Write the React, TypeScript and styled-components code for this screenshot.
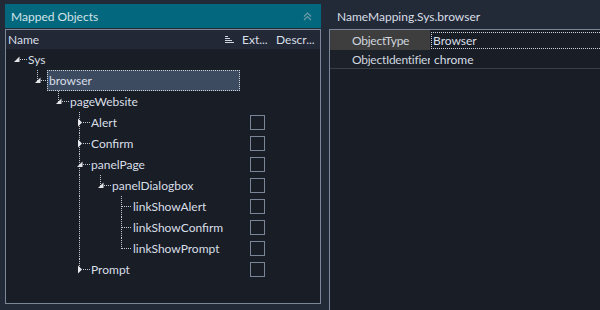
import styled, { createGlobalStyle } from "styled-components";

const GlobalStyle = createGlobalStyle`
  html, body {
    margin: 0;
    padding: 0;
    background: #232a37;
  }
  body {
    font-family: Lato, "Noto Sans", sans-serif;
    font-size: 12px;
    color: #d6dde6;
  }
  * {
    box-sizing: border-box;
  }
`;

const Page = styled.div`
  width: 600px;
  height: 310px;
  display: flex;
  gap: 8px;
  padding: 4px 0 0 5px;
  overflow: hidden;
`;

const LeftPanel = styled.section`
  width: 316px;
  height: 300px;
  display: flex;
  flex-direction: column;
  gap: 1px;
`;

const PanelHeader = styled.div`
  height: 24px;
  flex: none;
  background: #03687e;
  display: flex;
  align-items: center;
  justify-content: space-between;
  padding: 0 9px 0 6px;
  color: #d3e3e8;
`;

const TreeBox = styled.div`
  flex: 1;
  border: 1px solid #7b8698;
  background: #181d26;
  display: flex;
  flex-direction: column;
  overflow: hidden;
`;

const Columns = styled.div`
  display: grid;
  grid-template-columns: 1fr 33px 47px;
`;

const ColumnHeader = styled(Columns)`
  height: 19px;
  background: #222836;
  align-items: center;
  color: #d8dee6;
`;

const HeaderCell = styled.div<{ $pad?: number; $right?: number }>`
  display: flex;
  align-items: center;
  justify-content: space-between;
  padding-left: ${(p) => p.$pad ?? 2}px;
  padding-right: ${(p) => p.$right ?? 0}px;
  white-space: nowrap;
`;

const TreeBody = styled.div`
  display: flex;
  flex-direction: column;
`;

const TreeRow = styled(Columns)`
  height: 21px;
`;

const NameCell = styled.div`
  display: flex;
  align-items: stretch;
  min-width: 0;
`;

const Label = styled.div<{ $selected?: boolean }>`
  flex: 1;
  margin-left: -1px;
  padding-left: 1px;
  line-height: 19px;
  white-space: nowrap;
  color: #d8dfe7;
  border: 1px dotted ${(p) => (p.$selected ? "#c9d0d8" : "transparent")};
  background: ${(p) => (p.$selected ? "#3d4b60" : "transparent")};
`;

const CheckCell = styled.div`
  display: flex;
  align-items: center;
  padding-left: 10px;
`;

const CheckBox = styled.div`
  width: 15px;
  height: 15px;
  border: 1px solid #7a8698;
`;

const RightPanel = styled.section`
  flex: 1;
  display: flex;
  flex-direction: column;
  gap: 1px;
`;

const RightTitle = styled.div`
  height: 24px;
  flex: none;
  display: flex;
  align-items: center;
  padding-left: 8px;
  color: #d8dee6;
`;

const GridBox = styled.div`
  flex: 1;
  border-left: 1px solid #7b8698;
  border-top: 1px solid #7b8698;
  background: #181d26;
`;

const PropRow = styled.div<{ $h: number; $line?: boolean }>`
  display: grid;
  grid-template-columns: 100px 1fr;
  height: ${(p) => p.$h}px;
  border-bottom: ${(p) => (p.$line ? "1px solid #3a3e45" : "none")};
  box-sizing: content-box;
`;

const PropName = styled.div<{ $active?: boolean }>`
  display: flex;
  align-items: center;
  padding-left: 22px;
  background: ${(p) => (p.$active ? "#3e3e3e" : "#1b2029")};
  color: #cfd6df;
  white-space: nowrap;
  letter-spacing: -0.25px;
  overflow: hidden;
`;

const PropValue = styled.div<{ $focused?: boolean }>`
  display: flex;
  padding: ${(p) => (p.$focused ? "2px 0 1px 1px" : "0 0 0 2px")};
  color: #d8dfe7;
`;

const FocusBox = styled.div<{ $focused?: boolean }>`
  flex: 1;
  display: flex;
  align-items: center;
  padding-left: 1px;
  border: 1px dotted ${(p) => (p.$focused ? "#d0d4da" : "transparent")};
  border-right: none;
`;

type Kind = "open" | "closed" | "leaf";

type Node = {
  name: string;
  level: number;
  kind: Kind;
  last: boolean;
  guides: boolean[];
  check?: boolean;
  selected?: boolean;
};

const nodes: Node[] = [
  { name: "Sys", level: 0, kind: "open", last: true, guides: [] },
  { name: "browser", level: 1, kind: "open", last: true, guides: [false], selected: true },
  { name: "pageWebsite", level: 2, kind: "open", last: true, guides: [false, false] },
  { name: "Alert", level: 3, kind: "closed", last: false, guides: [false, false, false], check: true },
  { name: "Confirm", level: 3, kind: "closed", last: false, guides: [false, false, false], check: true },
  { name: "panelPage", level: 3, kind: "open", last: false, guides: [false, false, false], check: true },
  { name: "panelDialogbox", level: 4, kind: "open", last: true, guides: [false, false, false, true], check: true },
  { name: "linkShowAlert", level: 5, kind: "leaf", last: false, guides: [false, false, false, true, false], check: true },
  { name: "linkShowConfirm", level: 5, kind: "leaf", last: false, guides: [false, false, false, true, false], check: true },
  { name: "linkShowPrompt", level: 5, kind: "leaf", last: true, guides: [false, false, false, true, false], check: true },
  { name: "Prompt", level: 3, kind: "closed", last: true, guides: [false, false, false], check: true },
];

const DOT = "#c3c9d1";

const Guide = ({ line }: { line: boolean }) => (
  <svg width="21" height="21" shapeRendering="crispEdges" style={{ flex: "none" }}>
    {line && <line x1="10.5" y1="0" x2="10.5" y2="21" stroke={DOT} strokeDasharray="1 1" />}
  </svg>
);

const Connector = ({ node }: { node: Node }) => (
  <svg width="21" height="21" shapeRendering="crispEdges" style={{ flex: "none" }}>
    {node.level > 0 && (
      <line
        x1="10.5"
        y1="0"
        x2="10.5"
        y2={node.last ? 10.5 : 21}
        stroke={DOT}
        strokeDasharray="1 1"
      />
    )}
    <line
      x1={node.kind === "leaf" ? 11 : 14}
      y1="10.5"
      x2="21"
      y2="10.5"
      stroke={DOT}
      strokeDasharray="1 1"
    />
    {node.kind === "open" && <polygon points="13.5,7.5 13.5,13 8,13" fill="#e2e4e8" shapeRendering="auto" />}
    {node.kind === "closed" && <polygon points="9,6.5 13,10.5 9,14.5" fill="#e8eaee" shapeRendering="auto" />}
  </svg>
);

const SortIcon = () => (
  <svg width="9" height="8" viewBox="0 0 9 8" shapeRendering="crispEdges">
    <rect x="0" y="0" width="3" height="1" fill="#cfd5dd" />
    <rect x="0" y="2" width="5" height="1" fill="#cfd5dd" />
    <rect x="0" y="4" width="7" height="1" fill="#cfd5dd" />
    <rect x="0" y="6" width="9" height="1" fill="#cfd5dd" />
  </svg>
);

const CollapseIcon = () => (
  <svg width="9" height="9" viewBox="0 0 9 9" fill="none" stroke="#6c9aa6" strokeWidth="1.2">
    <polyline points="1,4.5 4.5,1 8,4.5" />
    <polyline points="1,8 4.5,4.5 8,8" />
  </svg>
);

export default function App() {
  return (
    <>
      <GlobalStyle />
      <Page>
        <LeftPanel>
          <PanelHeader>
            <span>Mapped Objects</span>
            <CollapseIcon />
          </PanelHeader>
          <TreeBox>
            <ColumnHeader>
              <HeaderCell $right={6}>
                <span>Name</span>
                <SortIcon />
              </HeaderCell>
              <HeaderCell>Ext...</HeaderCell>
              <HeaderCell $pad={3}>Descr...</HeaderCell>
            </ColumnHeader>
            <TreeBody>
              {nodes.map((n) => (
                <TreeRow key={n.name}>
                  <NameCell>
                    {n.guides.map((g, i) => (
                      <Guide key={i} line={g} />
                    ))}
                    <Connector node={n} />
                    <Label $selected={n.selected}>{n.name}</Label>
                  </NameCell>
                  <CheckCell>{n.check && <CheckBox />}</CheckCell>
                  <div />
                </TreeRow>
              ))}
            </TreeBody>
          </TreeBox>
        </LeftPanel>
        <RightPanel>
          <RightTitle>NameMapping.Sys.browser</RightTitle>
          <GridBox>
            <PropRow $h={20}>
              <PropName $active>ObjectType</PropName>
              <PropValue $focused>
                <FocusBox $focused>Browser</FocusBox>
              </PropValue>
            </PropRow>
            <PropRow $h={18} $line>
              <PropName>ObjectIdentifier</PropName>
              <PropValue>
                <FocusBox>chrome</FocusBox>
              </PropValue>
            </PropRow>
          </GridBox>
        </RightPanel>
      </Page>
    </>
  );
}
